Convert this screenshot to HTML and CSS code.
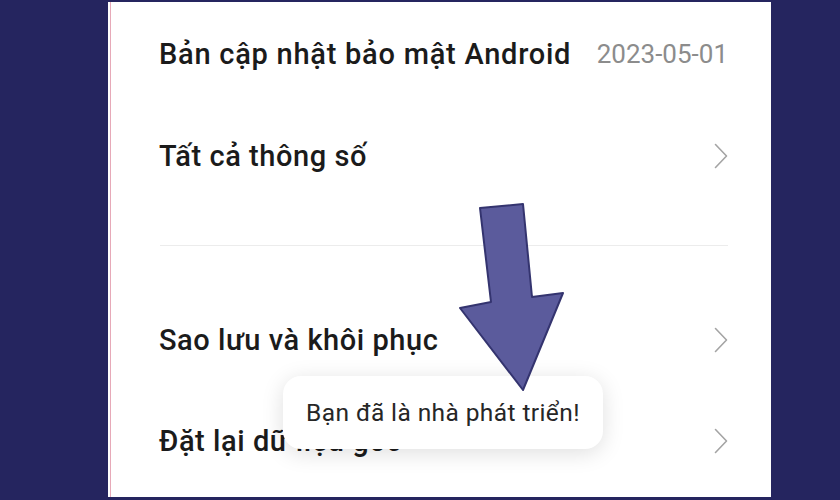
FILE: index.html
```html
<!DOCTYPE html>
<html lang="vi">
<head>
<meta charset="utf-8">
<title>Giới thiệu điện thoại</title>
<link rel="stylesheet" href="styles.css">
</head>
<body>
<div class="screen">
  <div class="inner">
    <div class="row row-first">
      <span class="label label-wide">Bản cập nhật bảo mật Android</span>
      <span class="value">2023-05-01</span>
    </div>
    <div class="row">
      <span class="label">Tất cả thông số</span>
      <svg class="chev" width="14" height="26" viewBox="0 0 14 26"><path d="M1.5 1.5 L12.5 13 L1.5 24.5" fill="none" stroke="#a4a4a4" stroke-width="1.6" stroke-linecap="round" stroke-linejoin="round"/></svg>
    </div>
    <div class="divider"></div>
    <div class="row">
      <span class="label">Sao lưu và khôi phục</span>
      <svg class="chev" width="14" height="26" viewBox="0 0 14 26"><path d="M1.5 1.5 L12.5 13 L1.5 24.5" fill="none" stroke="#a4a4a4" stroke-width="1.6" stroke-linecap="round" stroke-linejoin="round"/></svg>
    </div>
    <div class="row">
      <span class="label">Đặt lại dữ liệu gốc</span>
      <svg class="chev" width="14" height="26" viewBox="0 0 14 26"><path d="M1.5 1.5 L12.5 13 L1.5 24.5" fill="none" stroke="#a4a4a4" stroke-width="1.6" stroke-linecap="round" stroke-linejoin="round"/></svg>
    </div>
  </div>
  <div class="toast">Bạn đã là nhà phát triển!</div>
</div>
<svg class="arrow" width="840" height="500" viewBox="0 0 840 500">
  <polygon points="480,208 523,204 532,297 563,293 523,390 460,308 491,302" fill="#5b5b9c" stroke="#34346f" stroke-width="2" stroke-linejoin="round"/>
</svg>
</body>
</html>
```
FILE: styles.css
```css
html, body {
  margin: 0;
  padding: 0;
}
body {
  background: #25255f;
  width: 840px;
  height: 500px;
  overflow: hidden;
  position: relative;
  font-family: Roboto, "Noto Sans", "Liberation Sans", sans-serif;
}
.screen {
  position: relative;
  margin: 2px 0 0 108px;
  width: 663px;
  height: 495px;
  background: #ffffff;
  padding-left: 2px;
  box-sizing: border-box;
}
.inner {
  height: 100%;
  border-left: 1px solid #e7a9b8;
  padding: 0 43px 0 48px;
  box-sizing: border-box;
}
.row {
  height: 101px;
  display: flex;
  align-items: center;
  justify-content: space-between;
}
.row-first {
  height: 103px;
}
.label {
  font-size: 29px;
  font-weight: 500;
  color: #1b1b1b;
  letter-spacing: 0.55px;
}
.label-wide {
  letter-spacing: 0.75px;
}
.value {
  font-size: 26px;
  color: #8c8c8c;
}
.chev {
  display: block;
}
.divider {
  height: 1px;
  background: #ececec;
  margin: 39px 0 43px 1px;
}
.toast {
  position: absolute;
  left: 175px;
  top: 374px;
  width: 320px;
  height: 73px;
  box-sizing: border-box;
  background: #ffffff;
  border-radius: 18px;
  box-shadow: 0 4px 22px rgba(0, 0, 0, 0.13);
  display: flex;
  align-items: center;
  justify-content: center;
  font-size: 24.5px;
  letter-spacing: 0.4px;
  color: #262626;
}
.arrow {
  position: absolute;
  left: 0;
  top: 0;
  pointer-events: none;
}
```
